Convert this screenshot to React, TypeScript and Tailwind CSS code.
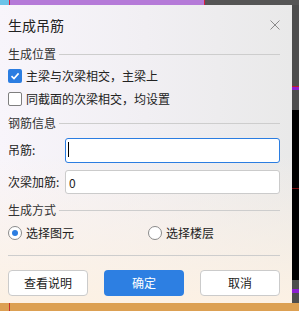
import React, { useState } from 'react'

const font = { fontFamily: '"Noto Sans CJK SC", "Liberation Sans", sans-serif' }

const SectionTitle: React.FC<{ text: string; className?: string }> = ({ text, className }) => (
    <div className={`flex items-center h-[18px] gap-[3px] ${className ?? ''}`}>
        <span className="text-[12px] text-[#333] leading-none">{text}</span>
        <div className="flex-1 h-px bg-[#cdcdcd]" />
    </div>
)

const Checkbox: React.FC<{ checked: boolean; label: string; onToggle: () => void; className?: string }> = ({ checked, label, onToggle, className }) => (
    <div className={`flex items-center h-[22px] gap-[4px] ${className ?? ''}`} onClick={onToggle}>
        {checked ? (
            <div className="w-[14px] h-[14px] rounded-[2px] bg-[#2b7de1] flex items-center justify-center">
                <svg width="10" height="10" viewBox="0 0 10 10">
                    <path d="M1.5 5.2 L4 7.6 L8.6 2.4" fill="none" stroke="white" strokeWidth="1.6" />
                </svg>
            </div>
        ) : (
            <div className="w-[14px] h-[14px] rounded-[2px] bg-white border border-[#7f7f7f]" />
        )}
        <span className="text-[12px] text-[#222] leading-none">{label}</span>
    </div>
)

const Radio: React.FC<{ checked: boolean; label: string; onPick: () => void; className?: string }> = ({ checked, label, onPick, className }) => (
    <div className={`flex items-center gap-[4px] ${className ?? ''}`} onClick={onPick}>
        <div className="w-[14px] h-[14px] rounded-full bg-white border border-[#8a8a8a] flex items-center justify-center">
            {checked && <div className="w-[6px] h-[6px] rounded-full bg-[#2b7de1]" />}
        </div>
        <span className="text-[12px] text-[#222] leading-none">{label}</span>
    </div>
)

export default function App() {
    const [opt1, setOpt1] = useState(true)
    const [opt2, setOpt2] = useState(false)
    const [mode, setMode] = useState<'el' | 'floor'>('el')
    const [diaojin, setDiaojin] = useState('')
    const [jiajin, setJiajin] = useState('0')

    return (
        <div className="relative w-[299px] h-[311px] overflow-hidden bg-[#4d4d4d]" style={font}>
            {/* what's behind the dialog */}
            <div className="absolute left-0 top-0 w-[299px] h-[5px] flex">
                <div className="w-[9px] bg-[#6ec3e8]" />
                <div className="w-px bg-[#d6203a]" />
                <div className="w-[194px] bg-[#b57ad8]" />
                <div className="w-px bg-[#d6203a]" />
                <div className="flex-1 bg-[#555555]" />
            </div>
            <div className="absolute left-[292px] top-[86px] w-[7px] h-[4px] bg-[#8a1fd0] border-t border-[#c01c2c]" />
            <div className="absolute left-[292px] top-[110px] w-[7px] h-[170px] bg-black" />
            <div className="absolute left-[292px] top-[188px] w-[7px] h-px bg-[#7a0d10]" />
            <div className="absolute left-[292px] top-[289px] w-[7px] h-[4px] bg-[#8a1fd0]" />
            <div className="absolute left-0 top-[303px] w-[299px] h-[8px] flex bg-[#dca052]">
                <div className="w-[9px]" />
                <div className="w-px bg-[#c8302a]" />
            </div>

            {/* dialog */}
            <div className="absolute left-0 top-[5px] w-[292px] h-[298px] bg-gradient-to-r from-[#f8f5fb] via-[#f1eff3] to-[#e9e9e9]">
                <div className="absolute inset-0 bg-gradient-to-b from-transparent via-transparent to-[#fcf1e4]" />
                <div className="relative pl-[8px] pr-[12px] flex flex-col">
                    <div className="h-[40px] flex items-center justify-between">
                        <span className="text-[14px] text-[#222] leading-none">生成吊筋</span>
                        <svg width="12" height="12" viewBox="0 0 12 12" className="mr-[-1px]">
                            <path d="M1.5 1.5 L10.5 10.5 M10.5 1.5 L1.5 10.5" stroke="#8a8a8a" strokeWidth="1" />
                        </svg>
                    </div>

                    <SectionTitle text="生成位置" />
                    <Checkbox className="mt-[2px]" checked={opt1} onToggle={() => setOpt1(!opt1)} label="主梁与次梁相交，主梁上" />
                    <Checkbox className="mt-[1px]" checked={opt2} onToggle={() => setOpt2(!opt2)} label="同截面的次梁相交，均设置" />

                    <SectionTitle className="mt-[4px]" text="钢筋信息" />
                    <div className="mt-[5px] flex items-center h-[25px]">
                        <span className="w-[57px] text-[12px] text-[#222]">吊筋:</span>
                        <div className="relative flex-1 h-[25px]">
                            <input
                                value={diaojin}
                                onChange={(e) => setDiaojin(e.target.value)}
                                className="w-full h-[25px] px-[3px] text-[12px] bg-white rounded-[3px] border border-[#2b7de1] outline-none"
                            />
                            {/* caret shown in the focused field */}
                            {diaojin === '' && <div className="absolute left-[3px] top-[5px] w-px h-[15px] bg-black" />}
                        </div>
                    </div>
                    <div className="mt-[8px] flex items-center h-[24px]">
                        <span className="w-[57px] text-[12px] text-[#222]">次梁加筋:</span>
                        <input
                            value={jiajin}
                            onChange={(e) => setJiajin(e.target.value)}
                            className="flex-1 h-[24px] px-[3px] text-[12px] text-[#222] bg-white rounded-[3px] border border-[#cbcbcb] outline-none"
                        />
                    </div>

                    <SectionTitle className="mt-[7px]" text="生成方式" />
                    <div className="mt-[3px] h-[22px] flex items-center">
                        <Radio className="w-[140px]" checked={mode === 'el'} onPick={() => setMode('el')} label="选择图元" />
                        <Radio checked={mode === 'floor'} onPick={() => setMode('floor')} label="选择楼层" />
                    </div>

                    <div className="mt-[11px] h-px bg-[#cdcdcd]" />

                    <div className="mt-[14px] flex justify-between h-[26px]">
                        <button className="w-[80px] h-[26px] rounded-[4px] bg-white border border-[#cbcbcb] text-[12px] text-[#222]">
                            查看说明
                        </button>
                        <button className="w-[80px] h-[26px] rounded-[4px] bg-[#2d7fe2] text-[12px] text-white">
                            确定
                        </button>
                        <button className="w-[80px] h-[26px] rounded-[4px] bg-white border border-[#cbcbcb] text-[12px] text-[#222]">
                            取消
                        </button>
                    </div>
                </div>
            </div>
        </div>
    )
}
